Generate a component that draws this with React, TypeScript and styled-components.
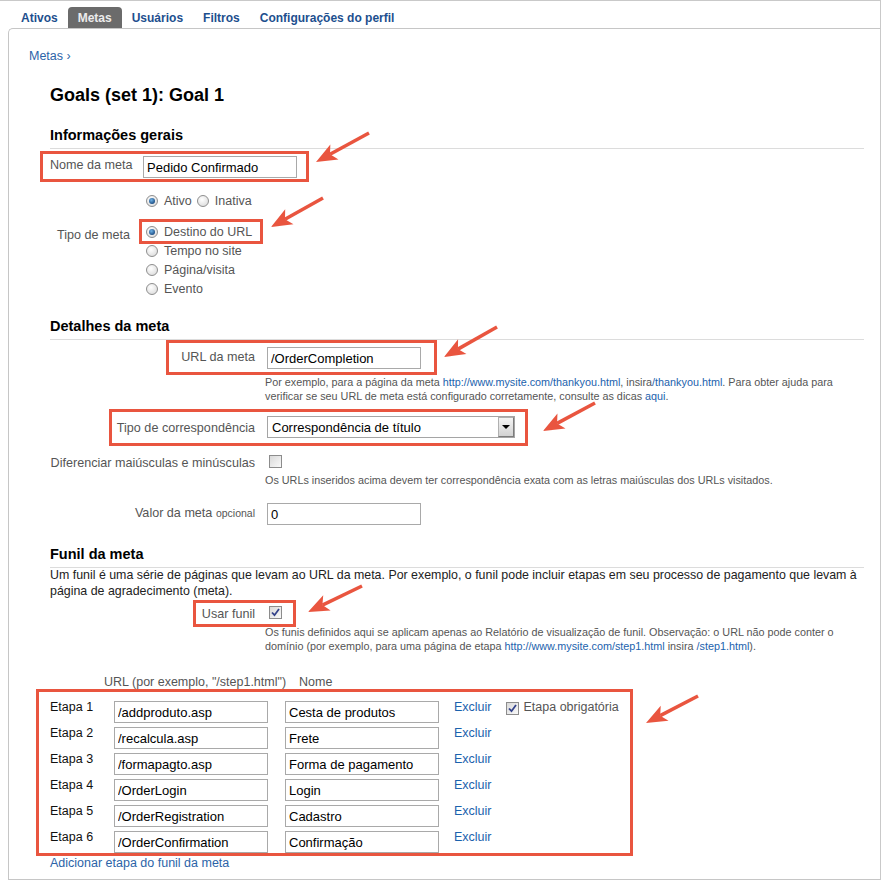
import React from "react";
import styled, { createGlobalStyle } from "styled-components";

const GlobalStyle = createGlobalStyle`
  html, body {
    margin: 0;
    padding: 0;
    background: #fff;
  }
  body {
    font-family: "Liberation Sans", Arial, sans-serif;
    color: #222;
  }
`;

const Root = styled.div`
  position: relative;
  width: 881px;
  height: 880px;
`;

const Page = styled.div`
  width: 881px;
  height: 880px;
  box-sizing: border-box;
  border-top: 1px solid #c9c9c9;
  border-right: 1px solid #c9c9c9;
  display: flex;
  flex-direction: column;
  overflow: hidden;
`;

const Tabs = styled.nav`
  display: flex;
  align-items: flex-end;
  height: 27px;
  padding-left: 11px;
  flex-shrink: 0;
`;

const Tab = styled.a<{ $active?: boolean }>`
  display: flex;
  align-items: center;
  height: 21px;
  padding: 0 10px;
  font-size: 12px;
  font-weight: bold;
  color: ${(p) => (p.$active ? "#ececec" : "#1d4f8e")};
  background: ${(p) => (p.$active ? "#6b6b6b" : "transparent")};
  border-radius: 4px 4px 0 0;
  text-decoration: none;
  white-space: nowrap;
`;

const Panel = styled.section`
  flex: 1;
  margin-left: 8px;
  border: 1px solid #c6c6c6;
  border-right: none;
  border-top-left-radius: 5px;
  padding: 19px 0 0 20px;
  box-sizing: border-box;
`;

const Breadcrumb = styled.a`
  display: block;
  font-size: 12.5px;
  line-height: 16px;
  color: #2c64a8;
  text-decoration: none;
`;

const Heading = styled.h1`
  margin: 20px 0 0 21px;
  font-size: 18px;
  line-height: 22px;
  font-weight: bold;
  color: #000;
`;

const Form = styled.div`
  margin-left: 21px;
  width: 814px;
`;

const SectionTitle = styled.h2<{ $gap: number }>`
  margin: ${(p) => p.$gap}px 0 0;
  padding-bottom: 4px;
  font-size: 14.5px;
  line-height: 18px;
  font-weight: bold;
  color: #000;
  border-bottom: 1px solid #dcdcdc;
`;

const GeneralRow = styled.div<{ $gap: number }>`
  display: grid;
  grid-template-columns: 80px auto;
  column-gap: 13px;
  justify-content: start;
  margin-top: ${(p) => p.$gap}px;
`;

const DetailRow = styled.div<{ $gap: number }>`
  display: grid;
  grid-template-columns: 205px auto;
  column-gap: 12px;
  justify-content: start;
  margin-top: ${(p) => p.$gap}px;
`;

const Label = styled.label<{ $pad?: number }>`
  text-align: right;
  font-size: 12.6px;
  line-height: 16px;
  color: #555;
  padding-top: ${(p) => p.$pad ?? 0}px;
  white-space: nowrap;
`;

const Optional = styled.span`
  font-size: 10.5px;
`;

const Field = styled.div`
  display: flex;
  flex-direction: column;
  align-items: flex-start;
`;

const TextInput = styled.input<{ $width?: number }>`
  box-sizing: border-box;
  width: ${(p) => p.$width ?? 154}px;
  height: 22px;
  margin: 0;
  padding: 0 3px;
  border: 1px solid #a9a9a9;
  font-family: "Liberation Sans", Arial, sans-serif;
  font-size: 13px;
  color: #000;
  background: #fff;
  outline: none;
`;

const Help = styled.p<{ $gap?: number }>`
  margin: ${(p) => p.$gap ?? 6}px 0 0 -2px;
  font-size: 10.8px;
  line-height: 14px;
  color: #555;
  white-space: nowrap;
`;

const Link = styled.a`
  color: #1b62ad;
  text-decoration: none;
`;

const OptionRow = styled.div`
  display: flex;
`;

const OptionList = styled.div`
  display: flex;
  flex-direction: column;
`;

const Option = styled.label`
  display: flex;
  align-items: center;
  height: 19px;
  margin-right: 2px;
  font-size: 12.5px;
  color: #555;
  white-space: nowrap;
`;

const Radio = styled.span<{ $checked?: boolean }>`
  position: relative;
  box-sizing: border-box;
  width: 12px;
  height: 12px;
  margin: 1px 6px 0 3px;
  border-radius: 50%;
  border: 1px solid #8e8e8e;
  background: radial-gradient(circle at 40% 35%, #ffffff, #d6d6d6);
  &::after {
    content: "";
    display: ${(p) => (p.$checked ? "block" : "none")};
    position: absolute;
    left: 2px;
    top: 2px;
    width: 6px;
    height: 6px;
    border-radius: 50%;
    background: radial-gradient(circle at 40% 35%, #6fb2e6, #1a4b82 75%);
  }
`;

const Box = styled.span<{ $ml?: number; $mt?: number }>`
  display: flex;
  align-items: center;
  justify-content: center;
  box-sizing: border-box;
  width: 13px;
  height: 13px;
  margin: ${(p) => p.$mt ?? 0}px 0 0 ${(p) => p.$ml ?? 0}px;
  border: 1px solid #8c8c8c;
  background: linear-gradient(135deg, #d9d9d9, #f9f9f9);
`;

const Check = ({ checked, ml, mt }: { checked?: boolean; ml?: number; mt?: number }) => (
  <Box $ml={ml} $mt={mt}>
    {checked && (
      <svg width="11" height="11" viewBox="0 0 11 11">
        <path d="M2 5.5 L4.5 8.2 L9 2" fill="none" stroke="#33428a" strokeWidth="1.8" />
      </svg>
    )}
  </Box>
);

const Select = styled.div`
  display: flex;
  align-items: center;
  box-sizing: border-box;
  width: 248px;
  height: 22px;
  border: 1px solid #a5a5a5;
  font-size: 13px;
  color: #000;
`;

const SelectValue = styled.span`
  flex: 1;
  padding-left: 4px;
  white-space: nowrap;
`;

const DropButton = styled.span`
  display: flex;
  align-items: center;
  justify-content: center;
  box-sizing: border-box;
  width: 16px;
  height: 20px;
  border: 1px solid #7c7c7c;
  border-top-color: #b0b0b0;
  border-left-color: #b0b0b0;
  background: linear-gradient(#f4f4f4, #d2d2d2);
  &::after {
    content: "";
    border-left: 4px solid transparent;
    border-right: 4px solid transparent;
    border-top: 4px solid #000;
  }
`;

const Paragraph = styled.p`
  margin: -1px 0 0;
  font-size: 12.4px;
  line-height: 16px;
  color: #222;
  white-space: nowrap;
`;

const ColumnHeads = styled.div`
  display: flex;
  margin: 21px 0 0 54px;
  font-size: 12.5px;
  line-height: 16px;
  color: #555;
  white-space: nowrap;
`;

const NameHead = styled.span`
  margin-left: 13px;
`;

const Steps = styled.div`
  display: flex;
  flex-direction: column;
  gap: 4px;
  margin-top: 11px;
`;

const StepRow = styled.div`
  display: flex;
  align-items: flex-start;
`;

const StepLabel = styled.span`
  width: 64px;
  margin-top: -2px;
  font-size: 12.5px;
  line-height: 16px;
  color: #111;
`;

const NameCell = styled.div`
  margin-left: 17px;
`;

const Remove = styled.a`
  margin: -2px 0 0 15px;
  font-size: 12.5px;
  line-height: 16px;
  color: #1b62ad;
  text-decoration: none;
`;

const Required = styled.label`
  display: flex;
  align-items: flex-start;
  margin-left: 14px;
  font-size: 12.5px;
  line-height: 16px;
  color: #555;
  white-space: nowrap;
`;

const RequiredText = styled.span`
  margin: -2px 0 0 5px;
`;

const AddLink = styled.a`
  display: block;
  margin-top: 2px;
  font-size: 12.5px;
  line-height: 16px;
  color: #2c64a8;
  text-decoration: none;
`;

const Overlay = styled.svg`
  position: absolute;
  left: 0;
  top: 0;
  pointer-events: none;
`;

const RED = "#e9553f";

const marks = [
  [40, 151, 309, 182],
  [139, 219, 263, 244],
  [166, 340, 437, 375],
  [109, 409, 528, 446],
  [193, 600, 296, 627],
  [36, 689, 633, 856],
];

const arrows = [
  [369, 133, 316, 162],
  [323, 198, 271, 227],
  [497, 327, 444, 357],
  [595, 403, 543, 431],
  [362, 586, 308, 612],
  [698, 696, 646, 723],
];

const Arrow = ({ a }: { a: number[] }) => {
  const [x1, y1, x2, y2] = a;
  const len = Math.hypot(x2 - x1, y2 - y1);
  const ux = (x2 - x1) / len;
  const uy = (y2 - y1) / len;
  const nx = -uy;
  const ny = ux;
  const L = 21;
  const W = 8.5;
  const bx = x2 - ux * L;
  const by = y2 - uy * L;
  const kx = x2 - ux * (L - 5);
  const ky = y2 - uy * (L - 5);
  const pts = [
    [x2, y2],
    [bx + nx * W, by + ny * W],
    [kx, ky],
    [bx - nx * W, by - ny * W],
  ]
    .map((p) => p.join(","))
    .join(" ");
  return (
    <g>
      <line x1={x1} y1={y1} x2={kx} y2={ky} stroke={RED} strokeWidth="3.5" />
      <polygon points={pts} fill={RED} />
    </g>
  );
};

const steps = [
  ["/addproduto.asp", "Cesta de produtos"],
  ["/recalcula.asp", "Frete"],
  ["/formapagto.asp", "Forma de pagamento"],
  ["/OrderLogin", "Login"],
  ["/OrderRegistration", "Cadastro"],
  ["/OrderConfirmation", "Confirmação"],
];

const goalTypes = ["Destino do URL", "Tempo no site", "Página/visita", "Evento"];

export default function App() {
  return (
    <Root>
      <GlobalStyle />
      <Page>
        <Tabs>
          <Tab>Ativos</Tab>
          <Tab $active>Metas</Tab>
          <Tab>Usuários</Tab>
          <Tab>Filtros</Tab>
          <Tab>Configurações do perfil</Tab>
        </Tabs>
        <Panel>
          <Breadcrumb>Metas ›</Breadcrumb>
          <Heading>Goals (set 1): Goal 1</Heading>
          <Form>
            <SectionTitle $gap={20}>Informações gerais</SectionTitle>
            <GeneralRow $gap={7}>
              <Label $pad={1}>Nome da meta</Label>
              <TextInput defaultValue="Pedido Confirmado" />
            </GeneralRow>
            <GeneralRow $gap={13}>
              <span />
              <OptionRow>
                <Option>
                  <Radio $checked />
                  Ativo
                </Option>
                <Option>
                  <Radio />
                  Inativa
                </Option>
              </OptionRow>
            </GeneralRow>
            <GeneralRow $gap={12}>
              <Label $pad={5}>Tipo de meta</Label>
              <OptionList>
                {goalTypes.map((t, i) => (
                  <Option key={t}>
                    <Radio $checked={i === 0} />
                    {t}
                  </Option>
                ))}
              </OptionList>
            </GeneralRow>

            <SectionTitle $gap={19}>Detalhes da meta</SectionTitle>
            <DetailRow $gap={7}>
              <Label $pad={2}>URL da meta</Label>
              <Field>
                <TextInput defaultValue="/OrderCompletion" />
                <Help>
                  Por exemplo, para a página da meta <Link>http://www.mysite.com/thankyou.html</Link>, insira
                  <Link>/thankyou.html</Link>. Para obter ajuda para
                  <br />
                  verificar se seu URL de meta está configurado corretamente, consulte as dicas <Link>aqui</Link>.
                </Help>
              </Field>
            </DetailRow>
            <DetailRow $gap={13}>
              <Label $pad={4}>Tipo de correspondência</Label>
              <Select>
                <SelectValue>Correspondência de título</SelectValue>
                <DropButton />
              </Select>
            </DetailRow>
            <DetailRow $gap={17}>
              <Label>Diferenciar maiúsculas e minúsculas</Label>
              <Field>
                <Check ml={2} />
                <Help $gap={5}>
                  Os URLs inseridos acima devem ter correspondência exata com as letras maiúsculas dos URLs visitados.
                </Help>
              </Field>
            </DetailRow>
            <DetailRow $gap={16}>
              <Label $pad={2}>
                Valor da meta <Optional>opcional</Optional>
              </Label>
              <TextInput defaultValue="0" />
            </DetailRow>

            <SectionTitle $gap={20}>Funil da meta</SectionTitle>
            <Paragraph>
              Um funil é uma série de páginas que levam ao URL da meta. Por exemplo, o funil pode incluir etapas em seu processo de pagamento que levam à
              <br />
              página de agradecimento (meta).
            </Paragraph>
            <DetailRow $gap={7}>
              <Label>Usar funil</Label>
              <Field>
                <Check checked ml={2} />
                <Help $gap={6}>
                  Os funis definidos aqui se aplicam apenas ao Relatório de visualização de funil. Observação: o URL não pode conter o
                  <br />
                  domínio (por exemplo, para uma página de etapa <Link>http://www.mysite.com/step1.html</Link> insira{" "}
                  <Link>/step1.html</Link>).
                </Help>
              </Field>
            </DetailRow>

            <ColumnHeads>
              <span>URL (por exemplo, "/step1.html")</span>
              <NameHead>Nome</NameHead>
            </ColumnHeads>
            <Steps>
              {steps.map(([url, name], i) => (
                <StepRow key={url}>
                  <StepLabel>Etapa {i + 1}</StepLabel>
                  <TextInput defaultValue={url} />
                  <NameCell>
                    <TextInput defaultValue={name} />
                  </NameCell>
                  <Remove>Excluir</Remove>
                  {i === 0 && (
                    <Required>
                      <Check checked mt={1} />
                      <RequiredText>Etapa obrigatória</RequiredText>
                    </Required>
                  )}
                </StepRow>
              ))}
            </Steps>
            <AddLink>Adicionar etapa do funil da meta</AddLink>
          </Form>
        </Panel>
      </Page>
      <Overlay width="881" height="880">
        {marks.map(([x1, y1, x2, y2], i) => (
          <rect
            key={i}
            x={x1 + 1.5}
            y={y1 + 1.5}
            width={x2 - x1 - 3}
            height={y2 - y1 - 3}
            fill="none"
            stroke={RED}
            strokeWidth="3"
          />
        ))}
        {arrows.map((a, i) => (
          <Arrow key={i} a={a} />
        ))}
      </Overlay>
    </Root>
  );
}
